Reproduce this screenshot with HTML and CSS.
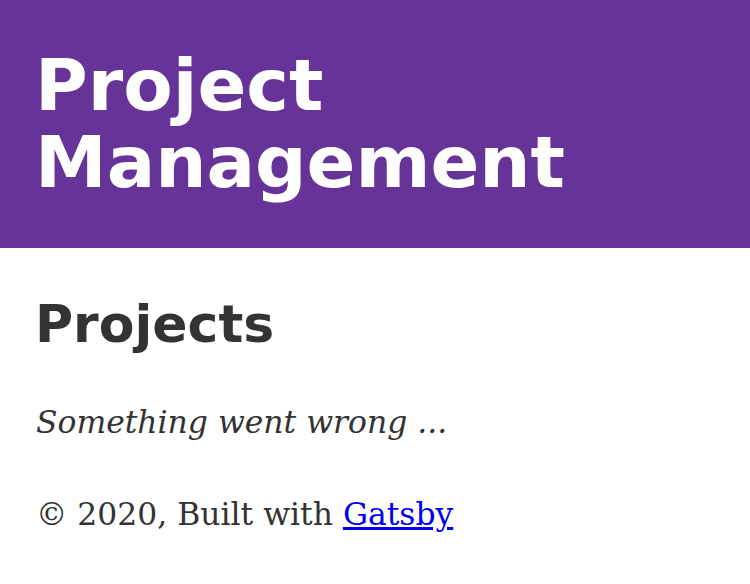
FILE: index.html
```html
<!DOCTYPE html>
<html>
<head>
<meta charset="utf-8">
<link rel="stylesheet" href="styles.css">
</head>
<body>
<header class="site-header">
  <div class="header-inner">
    <h1 class="site-title">Project Management</h1>
  </div>
</header>
<div class="container">
  <main>
    <h2 class="page-title">Projects</h2>
    <p class="error"><em>Something went wrong ...</em></p>
  </main>
  <footer class="site-footer">© 2020, Built with <a href="#">Gatsby</a></footer>
</div>
</body>
</html>
```
FILE: styles.css
```css
html, body {
  margin: 0;
  padding: 0;
}
body {
  font-family: "DejaVu Serif", Georgia, serif;
  font-size: 31.4px;
  line-height: 46px;
  color: #333333;
  background: #ffffff;
}
.site-header {
  background: #663399;
  margin-bottom: 48px;
}
.header-inner {
  padding: 47px 35px;
}
.site-title {
  margin: 0;
  font-family: "DejaVu Sans", sans-serif;
  font-weight: bold;
  font-size: 72px;
  line-height: 77px;
  color: #ffffff;
}
.container {
  padding: 0 35px;
}
.page-title {
  margin: 0 0 46px;
  font-family: "DejaVu Sans", sans-serif;
  font-weight: bold;
  font-size: 52px;
  line-height: 1.1;
  color: #333333;
}
.error {
  margin: 0 0 46px;
  padding-left: 1px;
}
.site-footer {
  padding-left: 1px;
}
.site-footer a {
  color: #0000ee;
}
```
